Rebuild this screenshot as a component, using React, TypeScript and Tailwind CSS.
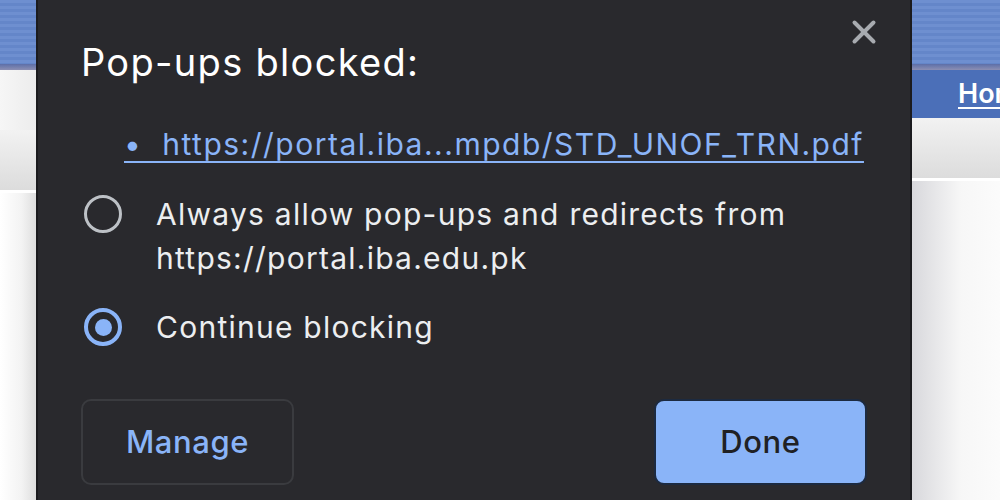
import { X } from 'lucide-react';

function PageStrip({ side }: { side: 'left' | 'right' }) {
  return (
    <div className="flex h-full flex-col overflow-hidden bg-white">
      <div className="h-[64px] bg-[repeating-linear-gradient(180deg,#6e8fd0_0px,#6e8fd0_3px,#6486c9_3px,#6486c9_6px)]" />
      <div className="h-[6px] bg-[linear-gradient(180deg,#5d6fa8,#8c8fb3)]" />
      {side === 'right' ? (
        <div className="flex h-[48px] items-center bg-[#4b6fb8] pl-[46px]">
          <span className="whitespace-nowrap text-[27px] font-semibold text-white underline underline-offset-4">Home</span>
        </div>
      ) : (
        <div className="h-[60px] bg-[linear-gradient(90deg,#f6f6f6,#ececec)]" />
      )}
      <div className="h-[60px] bg-[linear-gradient(180deg,#f2f2f2,#dcdcdc)]" />
      <div className="h-[3px] bg-white" />
      <div
        className={
          side === 'right'
            ? 'flex-1 bg-[linear-gradient(90deg,#d8d8dc,#f7f7f7_40%,#ffffff)]'
            : 'flex-1 bg-[linear-gradient(90deg,#ffffff,#f3f3f3_60%,#dedede)]'
        }
      />
    </div>
  );
}

function Radio({ checked }: { checked?: boolean }) {
  return checked ? (
    <span className="flex h-[38px] w-[38px] shrink-0 items-center justify-center rounded-full border-[4px] border-[#8ab4f8]">
      <span className="block h-[17px] w-[17px] rounded-full bg-[#8ab4f8]" />
    </span>
  ) : (
    <span className="block h-[38px] w-[38px] shrink-0 rounded-full border-[3px] border-[#bdc1c6]" />
  );
}

export default function App() {
  return (
    <div className="flex h-[500px] w-[1000px] overflow-hidden bg-white font-['Inter',sans-serif]">
      <div className="w-[36px] shrink-0">
        <PageStrip side="left" />
      </div>
      <div className="relative flex w-[876px] shrink-0 flex-col border-x-2 border-[#1b1b1e] bg-[#29292d] pl-[43px] pr-[43px] text-[#e8eaed]">
        <button className="absolute right-[27px] top-[13px] text-[#a8abb0]">
          <X size={38} strokeWidth={2.5} />
        </button>
        <h1 className="mt-[36px] text-[38px] leading-[52px] font-normal tracking-[1.3px] text-white">Pop-ups blocked:</h1>
        <div className="mt-[36px] flex items-center pl-[43px] text-[30px] leading-[40px] tracking-[1.5px] text-[#8ab4f8]">
          <span className="underline decoration-[2px] underline-offset-[6px]">
            •&nbsp;&nbsp;https://portal.iba...mpdb/STD_UNOF_TRN.pdf
          </span>
        </div>
        <div className="mt-[28px] flex items-start gap-[34px] pl-[3px]">
          <div className="pt-[3px]">
            <Radio />
          </div>
          <p className="text-[30px] leading-[44px] tracking-[1.25px] text-[#eceef0]">
            Always allow pop-ups and redirects from
            <br />
            https://portal.iba.edu.pk
          </p>
        </div>
        <div className="mt-[25px] flex items-center gap-[34px] pl-[3px]">
          <Radio checked />
          <p className="text-[30px] leading-[44px] tracking-[1.25px] text-[#eceef0]">Continue blocking</p>
        </div>
        <div className="mt-[50px] flex items-center justify-between">
          <button className="h-[86px] w-[213px] rounded-[10px] border-2 border-[#3a3b3f] text-[31px] font-medium tracking-[0.6px] text-[#8ab4f8]">
            Manage
          </button>
          <button className="h-[86px] w-[213px] rounded-[10px] border-2 border-[#1c2a40] bg-[#8ab4f8] text-[31px] font-medium tracking-[0.6px] text-[#202124]">
            Done
          </button>
        </div>
      </div>
      <div className="flex-1">
        <PageStrip side="right" />
      </div>
    </div>
  );
}
